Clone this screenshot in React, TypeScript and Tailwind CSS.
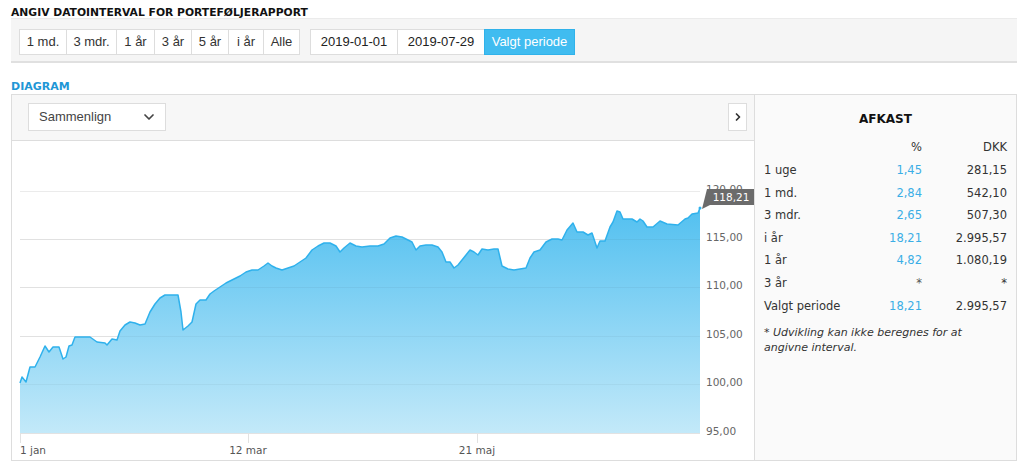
import { ChevronDown, ChevronRight } from "lucide-react";

const periods = [
  { label: "1 md.", w: "w-[48px]" },
  { label: "3 mdr.", w: "w-[51px]" },
  { label: "1 år", w: "w-[39px]" },
  { label: "3 år", w: "w-[38px]" },
  { label: "5 år", w: "w-[38px]" },
  { label: "i år", w: "w-[36px]" },
  { label: "Alle", w: "w-[37px]" },
];

const returns = [
  { label: "1 uge", pct: "1,45", dkk: "281,15" },
  { label: "1 md.", pct: "2,84", dkk: "542,10" },
  { label: "3 mdr.", pct: "2,65", dkk: "507,30" },
  { label: "i år", pct: "18,21", dkk: "2.995,57" },
  { label: "1 år", pct: "4,82", dkk: "1.080,19" },
  { label: "3 år", pct: "*", dkk: "*" },
  { label: "Valgt periode", pct: "18,21", dkk: "2.995,57" },
];

// page coordinates, svg viewBox lines up with the page
const points: [number, number][] = [
  [20, 383], [22, 377], [26, 382], [30, 367], [35, 367], [40, 357], [45, 346],
  [49, 352], [53, 347], [59, 347], [63, 359], [66, 357], [69, 346], [72, 345],
  [75, 337], [90, 337], [97, 342], [105, 343], [107, 345], [112, 339], [117, 340],
  [120, 331], [125, 325], [130, 322], [135, 323], [140, 325], [145, 324], [150, 312],
  [155, 304], [160, 298], [165, 295], [172, 295], [178, 295], [181, 312], [183, 330],
  [188, 326], [192, 322], [196, 304], [200, 300], [206, 300], [210, 294], [214, 291],
  [220, 287], [226, 283], [232, 280], [240, 276], [246, 272], [252, 270], [258, 270],
  [264, 266], [268, 263], [272, 266], [276, 268], [282, 270], [288, 268], [294, 266],
  [300, 262], [306, 258], [312, 250], [318, 246], [324, 243], [330, 243], [336, 246],
  [340, 252], [344, 248], [350, 243], [356, 246], [362, 247], [370, 246], [378, 246],
  [384, 244], [390, 238], [396, 236], [402, 237], [408, 240], [412, 242], [416, 250],
  [420, 246], [426, 245], [432, 245], [438, 247], [442, 252], [446, 262], [450, 262],
  [454, 268], [458, 265], [462, 260], [466, 255], [470, 250], [474, 252], [478, 255],
  [482, 249], [488, 250], [494, 249], [498, 249], [502, 266], [508, 269], [514, 270],
  [520, 269], [526, 268], [530, 258], [534, 252], [540, 250], [546, 242], [552, 239],
  [558, 239], [562, 240], [567, 230], [573, 223], [577, 232], [583, 232], [588, 235],
  [592, 233], [597, 248], [600, 241], [605, 241], [610, 227], [613, 222], [617, 211],
  [620, 212], [623, 219], [632, 219], [637, 222], [640, 219], [643, 221], [647, 227],
  [653, 227], [660, 221], [667, 224], [678, 225], [685, 219], [688, 218], [692, 214],
  [698, 213], [700, 208],
];

const gridLines = [
  { y: 191, label: "120,00" },
  { y: 239, label: "115,00" },
  { y: 287, label: "110,00" },
  { y: 336, label: "105,00" },
  { y: 384, label: "100,00" },
  { y: 433, label: "95,00" },
];

function Chart() {
  const line = points.map(([x, y], i) => `${i ? "L" : "M"}${x},${y}`).join(" ");
  const area = `${line} L700,433 L20,433 Z`;

  return (
    <svg width={742} height={318} viewBox="12 141 742 318" className="block">
      <defs>
        <linearGradient id="fill" x1="0" y1="208" x2="0" y2="433" gradientUnits="userSpaceOnUse">
          <stop offset="0" stopColor="#52c0f0" />
          <stop offset="1" stopColor="#c3e9f9" />
        </linearGradient>
      </defs>
      {gridLines.slice(0, 5).map((g) => (
        <line key={g.y} x1={20} x2={700} y1={g.y + 0.5} y2={g.y + 0.5} stroke="#ebebeb" />
      ))}
      <path d={area} fill="url(#fill)" />
      {gridLines.slice(1, 5).map((g) => (
        <line key={g.y} x1={20} x2={700} y1={g.y + 0.5} y2={g.y + 0.5} stroke="#000" strokeOpacity={0.04} />
      ))}
      <path d={line} fill="none" stroke="#2fb1ec" strokeWidth={1.5} strokeLinejoin="round" />
      <line x1={20} x2={700} y1={433.5} y2={433.5} stroke="#e2e2e2" />
      {[20, 248, 477].map((x) => (
        <line key={x} x1={x + 0.5} x2={x + 0.5} y1={433} y2={443} stroke="#e2e2e2" />
      ))}
      <g fontFamily="'DejaVu Sans', Verdana, sans-serif" fontSize={10.5} fill="#666">
        {gridLines.map((g) => (
          <text key={g.y} x={706} y={g.y + 2}>
            {g.label}
          </text>
        ))}
        <text x={20} y={454} fill="#555">1 jan</text>
        <text x={248} y={454} textAnchor="middle" fill="#555">12 mar</text>
        <text x={477} y={454} textAnchor="middle" fill="#555">21 maj</text>
      </g>
      <polygon points="702,209 707,189 754,189 754,205 710,205" fill="#6b6b6b" />
      <text
        x={731}
        y={201}
        textAnchor="middle"
        fontFamily="'DejaVu Sans', Verdana, sans-serif"
        fontSize={10.5}
        fill="#fff"
      >
        118,21
      </text>
      <circle cx={700} cy={208} r={1.5} fill="#2fb1ec" />
    </svg>
  );
}

export default function App() {
  return (
    <div className="w-[1024px] h-[469px] overflow-hidden bg-white pl-[11px] pr-[7px] font-['DejaVu_Sans',Verdana,sans-serif] text-[#333]">
      <div className="h-[18px] pt-[6px] text-[10.75px] leading-[13px] font-bold text-[#111]">
        ANGIV DATOINTERVAL FOR PORTEFØLJERAPPORT
      </div>

      <div className="h-[45px] bg-[#f5f5f5] border-t border-[#ebebeb] border-b-2 border-b-[#e0e0e0] pl-[8px] pt-[10px] flex gap-[10px] font-['Liberation_Sans',Arial,sans-serif] text-[13px]">
        <div className="flex">
          {periods.map((p, i) => (
            <button
              key={p.label}
              className={`${p.w} h-[26px] bg-white border border-[#dddddd] text-[#333] leading-[24px] text-center ${i ? "-ml-px" : ""}`}
            >
              {p.label}
            </button>
          ))}
        </div>
        <div className="flex">
          <div className="w-[88px] h-[26px] bg-white border border-[#dddddd] leading-[24px] text-center text-[#222]">
            2019-01-01
          </div>
          <div className="-ml-px w-[88px] h-[26px] bg-white border border-[#dddddd] leading-[24px] text-center text-[#222]">
            2019-07-29
          </div>
          <button className="-ml-px w-[91px] h-[26px] bg-[#40bcf0] border border-[#30b2ea] leading-[24px] text-center text-white">
            Valgt periode
          </button>
        </div>
      </div>

      <div className="mt-[17px] h-[14px] text-[11px] leading-[14px] font-bold text-[#1f97d6]">
        DIAGRAM
      </div>

      <div className="flex h-[367px]">
        <div className="w-[744px] border border-[#dddddd] flex flex-col">
          <div className="h-[46px] shrink-0 bg-[#f7f7f7] border-b border-[#dddddd] flex items-start justify-between pl-[16px] pr-[7px] pt-[8px]">
            <div className="w-[138px] h-[28px] bg-white border border-[#dddddd] flex items-center justify-between pl-[10px] pr-[8px] font-['Liberation_Sans',Arial,sans-serif] text-[13px] text-[#444]">
              <span>Sammenlign</span>
              <ChevronDown size={16} strokeWidth={2.6} className="text-[#444]" />
            </div>
            <div className="w-[19px] h-[28px] bg-white border border-[#dddddd] flex items-center justify-center">
              <ChevronRight size={12} strokeWidth={3.5} className="text-[#333]" />
            </div>
          </div>
          <div className="flex-1 bg-white">
            <Chart />
          </div>
        </div>

        <div className="w-[262px] bg-[#fafafa] border-t border-r border-b border-[#dddddd] px-[9px]">
          <div className="mt-[15px] h-[18px] leading-[18px] text-center text-[12px] font-bold text-[#111]">
            AFKAST
          </div>
          <div className="mt-[7px] grid grid-cols-[1fr_70px_85px] text-[11.5px] leading-[24px]">
            <div />
            <div className="text-right">%</div>
            <div className="text-right">DKK</div>
          </div>
          {returns.map((r) => (
            <div
              key={r.label}
              className="grid grid-cols-[1fr_70px_85px] h-[22.6px] text-[11.5px] leading-[22.6px]"
            >
              <div>{r.label}</div>
              <div className={`text-right ${r.pct === "*" ? "text-[#555]" : "text-[#3aaee6]"}`}>{r.pct}</div>
              <div className="text-right">{r.dkk}</div>
            </div>
          ))}
          <div className="mt-[8px] text-[11px] leading-[15px] italic text-[#333]">
            * Udvikling kan ikke beregnes for at
            <br />
            angivne interval.
          </div>
        </div>
      </div>
    </div>
  );
}
